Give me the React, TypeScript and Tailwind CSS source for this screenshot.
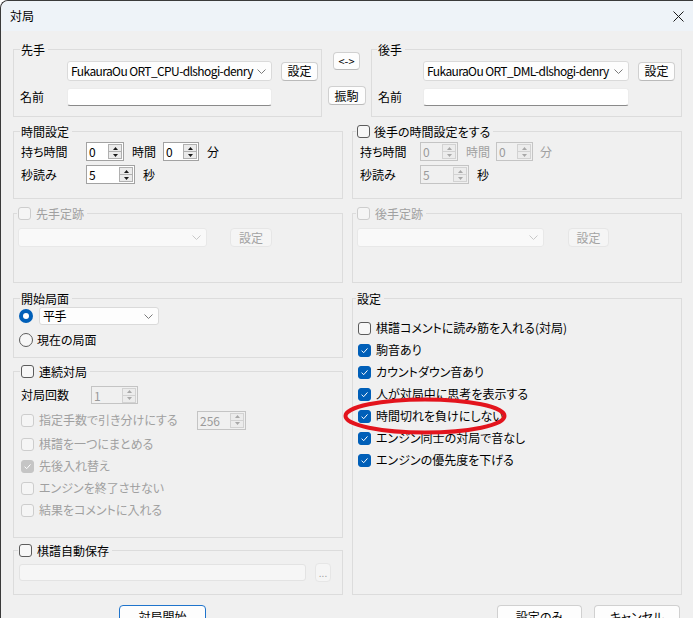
import React from "react";

function Check({ checked = false, disabled = false }: { checked?: boolean; disabled?: boolean }) {
  let cls = "bg-[#f7f7f7] border-[#5c5c5c]";
  if (checked && !disabled) cls = "bg-[#005fb8] border-[#005fb8]";
  else if (checked && disabled) cls = "bg-[#c5c5c5] border-[#c5c5c5]";
  else if (disabled) cls = "bg-[#f5f5f5] border-[#cdcdcd]";
  return (
    <span className={`w-[13px] h-[13px] rounded-[3px] border flex items-center justify-center shrink-0 ${cls}`}>
      {checked && (
        <svg width="9" height="9" viewBox="0 0 9 9">
          <path d="M1.6 4.7 3.7 6.7 7.5 2.4" fill="none" stroke="#ffffff" strokeWidth="1" />
        </svg>
      )}
    </span>
  );
}

function Radio({ checked = false }: { checked?: boolean }) {
  return checked ? (
    <span className="w-[14px] h-[14px] rounded-full bg-[#005fb8] flex items-center justify-center shrink-0">
      <span className="w-[6px] h-[6px] rounded-full bg-white" />
    </span>
  ) : (
    <span className="w-[14px] h-[14px] rounded-full border border-[#5c5c5c] bg-[#f7f7f7] shrink-0" />
  );
}

function Arrows({ disabled = false }: { disabled?: boolean }) {
  const c = disabled ? "#a8a8a8" : "#1a1a1a";
  return (
    <div
      className={`w-[14px] h-[15px] border flex flex-col ${
        disabled ? "border-[#d2d2d2] bg-[#ececec]" : "border-[#b0b0b0] bg-[#ebebeb]"
      }`}
    >
      <div
        className={`flex-1 flex items-center justify-center border-b ${
          disabled ? "border-[#d2d2d2]" : "border-[#b0b0b0]"
        }`}
      >
        <svg width="5" height="3" viewBox="0 0 5 3">
          <path d="M0 3 2.5 0 5 3Z" fill={c} />
        </svg>
      </div>
      <div className="flex-1 flex items-center justify-center">
        <svg width="5" height="3" viewBox="0 0 5 3">
          <path d="M0 0 2.5 3 5 0Z" fill={c} />
        </svg>
      </div>
    </div>
  );
}

function Spin({ value, w, h = "h-[19px]", disabled = false }: { value: string; w: string; h?: string; disabled?: boolean }) {
  return (
    <div
      className={`${w} ${h} border flex items-center justify-between pl-[2px] pr-[1px] shrink-0 ${
        disabled ? "bg-[#f0f0f0] border-[#c4c4c4] text-[#9a9a9a]" : "bg-white border-[#a2a2a2] text-black"
      }`}
    >
      <span className="text-[12px] leading-[15px]">{value}</span>
      <Arrows disabled={disabled} />
    </div>
  );
}

function Combo({ text = "", w, h = "h-[20px]", disabled = false }: { text?: string; w: string; h?: string; disabled?: boolean }) {
  return (
    <div
      className={`${w} ${h} rounded-[3px] border flex items-center pl-[3px] pr-[5px] shrink-0 ${
        disabled ? "bg-[#f9f9f9] border-[#e8e8e8]" : "bg-[#fdfdfd] border-[#dadada]"
      }`}
    >
      <span className="flex-1 overflow-hidden whitespace-nowrap text-[12px] leading-[16px] tracking-[-0.6px]">{text}</span>
      <svg width="9" height="5" viewBox="0 0 9 5" className="shrink-0 ml-[2px]">
        <path d="M0.5 0.5 4.5 4.5 8.5 0.5" fill="none" stroke={disabled ? "#c8c8c8" : "#7a7a7a"} strokeWidth="1" />
      </svg>
    </div>
  );
}

function Btn({ children, cls, disabled = false }: { children: React.ReactNode; cls: string; disabled?: boolean }) {
  return (
    <div
      className={`${cls} rounded-[4px] border flex items-center justify-center text-[12px] leading-[16px] shrink-0 ${
        disabled ? "bg-[#f5f5f5] border-[#e6e6e6] text-[#a3a3a3]" : "bg-[#fdfdfd] border-[#d0d0d0] border-b-[#bababa] text-black"
      }`}
    >
      {children}
    </div>
  );
}

function TextBox({ w, h, disabled = false }: { w: string; h: string; disabled?: boolean }) {
  return (
    <div
      className={`${w} ${h} rounded-[3px] border shrink-0 ${
        disabled ? "bg-[#f6f6f6] border-[#e3e3e3]" : "bg-white border-[#ececec] border-b-[#8a8a8a]"
      }`}
    />
  );
}

function Group({
  legend,
  lcls,
  cls,
  children,
}: {
  legend: React.ReactNode;
  lcls: string;
  cls: string;
  children?: React.ReactNode;
}) {
  return (
    <fieldset className={`border border-[#dcdcdc] min-w-0 shrink-0 ${cls}`}>
      <legend className={`h-[17px] text-[12px] leading-[17px] pl-[1px] pr-[3px] ${lcls}`}>
        <span className="flex items-center h-[17px]">{legend}</span>
      </legend>
      {children}
    </fieldset>
  );
}

const Dis = "text-[#a0a0a0]";

export default function App() {
  return (
    <div className="w-[693px] h-[618px] overflow-hidden relative bg-[#f0f0f0] border-l border-t border-[#3a3a3a] rounded-tl-[8px] text-black font-['Noto_Sans_CJK_JP',sans-serif] [font-feature-settings:'palt'] text-[12px]">
      {/* Title bar */}
      <div className="h-[30px] bg-[#eef3f8] rounded-tl-[7px] flex items-center justify-between pl-[9px] pr-[9px]">
        <span className="text-[12px] leading-[16px]">対局</span>
        <svg width="11" height="11" viewBox="0 0 11 11">
          <path d="M0.5 0.5 10.5 10.5 M10.5 0.5 0.5 10.5" stroke="#1a1a1a" strokeWidth="1" fill="none" />
        </svg>
      </div>

      <div className="pl-[12px]">
        {/* Row 1 */}
        <div className="flex mt-[10px]">
          <Group legend="先手" lcls="ml-[6px]" cls="w-[309px] h-[76px]">
            <div className="pt-[3px] pl-[6px]">
              <div className="flex items-center">
                <div className="w-[47px]" />
                <Combo text="FukauraOu ORT_CPU-dlshogi-denry" w="w-[205px]" />
                <div className="ml-[9px]">
                  <Btn cls="w-[37px] h-[19px]">設定</Btn>
                </div>
              </div>
              <div className="flex items-center mt-[7px]">
                <span className="w-[47px]">名前</span>
                <TextBox w="w-[205px]" h="h-[18px]" />
              </div>
            </div>
          </Group>
          <div className="w-[49px] flex flex-col items-center">
            <div className="mt-[11px]">
              <Btn cls="w-[27px] h-[18px]">
                <span className="text-[11px] leading-[14px]">&lt;-&gt;</span>
              </Btn>
            </div>
            <div className="mt-[16px]">
              <Btn cls="w-[38px] h-[19px]">振駒</Btn>
            </div>
          </div>
          <Group legend="後手" lcls="ml-[5px]" cls="w-[311px] h-[76px]">
            <div className="pt-[3px] pl-[6px]">
              <div className="flex items-center">
                <div className="w-[45px]" />
                <Combo text="FukauraOu ORT_DML-dlshogi-denry" w="w-[206px]" />
                <div className="ml-[9px]">
                  <Btn cls="w-[37px] h-[19px]">設定</Btn>
                </div>
              </div>
              <div className="flex items-center mt-[7px]">
                <span className="w-[45px]">名前</span>
                <TextBox w="w-[206px]" h="h-[18px]" />
              </div>
            </div>
          </Group>
        </div>

        {/* Row 2 */}
        <div className="flex gap-[9px] mt-[6px]">
          <Group legend="時間設定" lcls="ml-[6px]" cls="w-[330px] h-[76px]">
            <div className="pt-[2px] pl-[7px]">
              <div className="flex items-center">
                <span className="w-[65px]">持ち時間</span>
                <Spin value="0" w="w-[38px]" />
                <span className="ml-[8px] w-[31px]">時間</span>
                <Spin value="0" w="w-[36px]" />
                <span className="ml-[8px]">分</span>
              </div>
              <div className="flex items-center mt-[4px]">
                <span className="w-[65px]">秒読み</span>
                <Spin value="5" w="w-[49px]" />
                <span className="ml-[8px]">秒</span>
              </div>
            </div>
          </Group>
          <Group
            legend={
              <>
                <Check />
                <span className="ml-[4px]">後手の時間設定をする</span>
              </>
            }
            lcls="ml-[3px]"
            cls="w-[330px] h-[76px]"
          >
            <div className="pt-[2px] pl-[7px]">
              <div className="flex items-center">
                <span className="w-[60px]">持ち時間</span>
                <Spin value="0" w="w-[38px]" disabled />
                <span className={`ml-[8px] w-[30px] ${Dis}`}>時間</span>
                <Spin value="0" w="w-[37px]" disabled />
                <span className={`ml-[7px] ${Dis}`}>分</span>
              </div>
              <div className="flex items-center mt-[4px]">
                <span className="w-[60px]">秒読み</span>
                <Spin value="5" w="w-[49px]" disabled />
                <span className="ml-[8px]">秒</span>
              </div>
            </div>
          </Group>
        </div>

        {/* Row 3 */}
        <div className="flex gap-[9px] mt-[6px]">
          <Group
            legend={
              <>
                <Check disabled />
                <span className={`ml-[5px] ${Dis}`}>先手定跡</span>
              </>
            }
            lcls="ml-[3px]"
            cls="w-[330px] h-[78px]"
          >
            <div className="pt-[6px] pl-[4px] flex items-center">
              <Combo w="w-[189px]" h="h-[19px]" disabled />
              <div className="ml-[23px]">
                <Btn cls="w-[42px] h-[19px]" disabled>
                  設定
                </Btn>
              </div>
            </div>
          </Group>
          <Group
            legend={
              <>
                <Check disabled />
                <span className={`ml-[5px] ${Dis}`}>後手定跡</span>
              </>
            }
            lcls="ml-[3px]"
            cls="w-[330px] h-[78px]"
          >
            <div className="pt-[6px] pl-[4px] flex items-center">
              <Combo w="w-[187px]" h="h-[19px]" disabled />
              <div className="ml-[24px]">
                <Btn cls="w-[41px] h-[19px]" disabled>
                  設定
                </Btn>
              </div>
            </div>
          </Group>
        </div>

        {/* Row 4 */}
        <div className="flex gap-[9px] mt-[7px]">
          <div className="w-[330px] flex flex-col">
            <Group legend="開始局面" lcls="ml-[6px]" cls="w-[330px] h-[68px]">
              <div className="pl-[5px]">
                <div className="flex items-center h-[18px]">
                  <Radio checked />
                  <div className="ml-[6px]">
                    <Combo text="平手" w="w-[120px]" h="h-[18px]" />
                  </div>
                </div>
                <div className="flex items-center h-[18px] mt-[6px]">
                  <Radio />
                  <span className="ml-[4px]">現在の局面</span>
                </div>
              </div>
            </Group>

            <Group
              legend={
                <>
                  <Check />
                  <span className="ml-[5px]">連続対局</span>
                </>
              }
              lcls="ml-[6px]"
              cls="w-[330px] h-[175px] mt-[5px]"
            >
              <div className="pl-[7px] pt-[6px]">
                <div className="flex items-center h-[18px]">
                  <span className="w-[70px]">対局回数</span>
                  <Spin value="1" w="w-[47px]" h="h-[18px]" disabled />
                </div>
                <div className="flex items-center h-[20px] mt-[6px]">
                  <Check disabled />
                  <span className={`ml-[5px] w-[158px] ${Dis}`}>指定手数で引き分けにする</span>
                  <Spin value="256" w="w-[49px]" h="h-[19px]" disabled />
                </div>
                <div className="flex items-center h-[22px] mt-[3px]">
                  <Check disabled />
                  <span className={`ml-[5px] ${Dis}`}>棋譜を一つにまとめる</span>
                </div>
                <div className="flex items-center h-[22px]">
                  <Check checked disabled />
                  <span className={`ml-[5px] ${Dis}`}>先後入れ替え</span>
                </div>
                <div className="flex items-center h-[22px]">
                  <Check disabled />
                  <span className={`ml-[5px] ${Dis}`}>エンジンを終了させない</span>
                </div>
                <div className="flex items-center h-[22px]">
                  <Check disabled />
                  <span className={`ml-[5px] ${Dis}`}>結果をコメントに入れる</span>
                </div>
              </div>
            </Group>

            <Group
              legend={
                <>
                  <Check />
                  <span className="ml-[5px]">棋譜自動保存</span>
                </>
              }
              lcls="ml-[4px]"
              cls="w-[330px] h-[53px] mt-[4px]"
            >
              <div className="pl-[5px] pt-[4px] flex items-center h-[23px]">
                <TextBox w="w-[287px]" h="h-[17px]" disabled />
                <div className="ml-[9px]">
                  <Btn cls="w-[16px] h-[19px]" disabled>
                    <span className="text-[10px] leading-[10px]">...</span>
                  </Btn>
                </div>
              </div>
            </Group>
          </div>

          <Group legend="設定" lcls="ml-[3px]" cls="w-[330px] h-[305px]">
            <div className="pl-[5px] pt-[10px]">
              {[
                ["棋譜コメントに読み筋を入れる(対局)", false],
                ["駒音あり", true],
                ["カウントダウン音あり", true],
                ["人が対局中に思考を表示する", true],
                ["時間切れを負けにしない", true],
                ["エンジン同士の対局で音なし", true],
                ["エンジンの優先度を下げる", true],
              ].map(([label, c]) => (
                <div key={label as string} className="flex items-center h-[22px]">
                  <Check checked={c as boolean} />
                  <span className="ml-[5px]">{label as string}</span>
                </div>
              ))}
            </div>
          </Group>
        </div>

        {/* Bottom buttons */}
        <div className="flex mt-[10px]">
          <div className="ml-[106px]">
            <div className="w-[87px] h-[24px] rounded-[4px] border border-[#1f74cc] bg-[#fdfdfd] flex items-center justify-center">
              <span className="text-[12px] leading-[16px]">対局開始</span>
            </div>
          </div>
          <div className="ml-[291px]">
            <Btn cls="w-[85px] h-[24px]">設定のみ</Btn>
          </div>
          <div className="ml-[12px]">
            <Btn cls="w-[86px] h-[24px]">キャンセル</Btn>
          </div>
        </div>
      </div>

      {/* Red annotation ellipse */}
      <svg className="absolute left-[342px] top-[396px]" width="165" height="39" viewBox="0 0 165 39">
        <ellipse cx="82" cy="19" rx="79.5" ry="16.5" fill="none" stroke="#e3141d" strokeWidth="4" />
      </svg>
    </div>
  );
}
